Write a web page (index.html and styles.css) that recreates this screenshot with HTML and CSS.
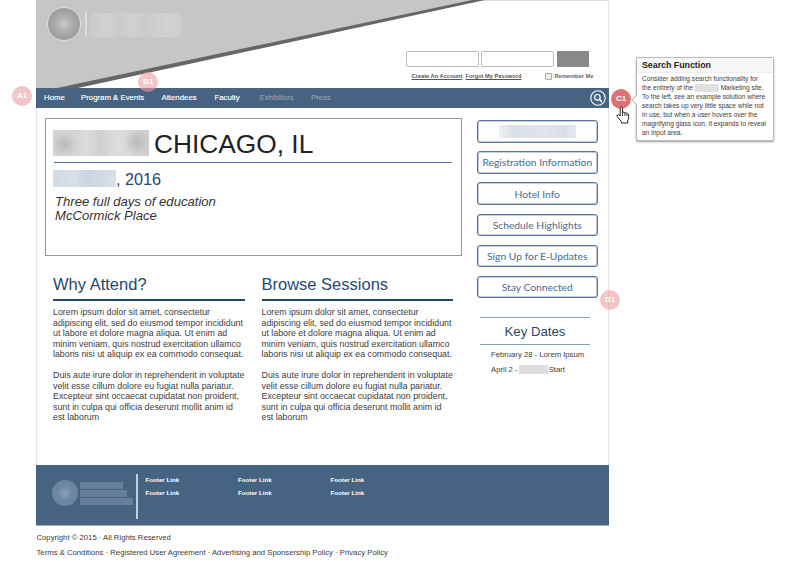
FILE: index.html
```
<!DOCTYPE html>
<html lang="en">
<head>
<meta charset="utf-8">
<title>Chicago, IL 2016</title>
<link rel="stylesheet" href="styles.css">
</head>
<body>
<div class="page">
  <header class="header">
    <svg class="slope" viewBox="0 0 573 88" aria-hidden="true">
      <path d="M0 0H448L28 88H0Z" fill="#c6c6c6"/>
      <path d="M436 0H449L42 88H21Z" fill="#666"/>
    </svg>
    <div class="brand"><span class="seal"></span><span class="brand-bar"></span><span class="brand-name"></span></div>
    <form class="login">
      <div class="login-row"><input class="field" type="text" aria-label="User"><input class="field" type="text" aria-label="Key"><span class="submit"></span></div>
      <div class="login-links"><a class="create">Create An Account</a><a class="forgot">Forgot My Password</a><span class="check"></span><span class="remember">Remember Me</span></div>
    </form>
  </header>
  <nav class="nav">
    <a class="n1">Home</a><a class="n2">Program &amp; Events</a><a class="n3">Attendees</a><a class="n4">Faculty</a><a class="n5 dim">Exhibitors</a><a class="dim">Press</a>
    <svg class="search" viewBox="0 0 16 16" fill="none" stroke="#fff"><circle cx="8" cy="8" r="7.2" stroke-width="1.1"/><circle cx="7.4" cy="7.3" r="2.8" stroke-width="1.2"/><path d="M9.4 9.4l2.5 2.5" stroke-width="1.6"/></svg>
  </nav>
  <main class="main">
    <div class="content">
      <section class="hero">
        <h1><span class="blur-title"></span><span class="city">CHICAGO, IL</span></h1>
        <h2><span class="blur-date"></span><span>, 2016</span></h2>
        <p>Three full days of education<br>McCormick Place</p>
      </section>
      <div class="columns">
        <article>
          <h3 class="why">Why Attend?</h3>
          <p>Lorem ipsum dolor sit amet, consectetur<br>adipiscing elit, sed do eiusmod tempor incididunt<br>ut labore et dolore magna aliqua. Ut enim ad<br>minim veniam, quis nostrud exercitation ullamco<br>laboris nisi ut aliquip ex ea commodo consequat.</p>
          <p>Duis aute irure dolor in reprehenderit in voluptate<br>velit esse cillum dolore eu fugiat nulla pariatur.<br>Excepteur sint occaecat cupidatat non proident,<br>sunt in culpa qui officia deserunt mollit anim id<br>est laborum</p>
        </article>
        <article>
          <h3>Browse Sessions</h3>
          <p>Lorem ipsum dolor sit amet, consectetur<br>adipiscing elit, sed do eiusmod tempor incididunt<br>ut labore et dolore magna aliqua. Ut enim ad<br>minim veniam, quis nostrud exercitation ullamco<br>laboris nisi ut aliquip ex ea commodo consequat.</p>
          <p>Duis aute irure dolor in reprehenderit in voluptate<br>velit esse cillum dolore eu fugiat nulla pariatur.<br>Excepteur sint occaecat cupidatat non proident,<br>sunt in culpa qui officia deserunt mollit anim id<br>est laborum</p>
        </article>
      </div>
    </div>
    <aside class="sidebar">
      <div class="buttons">
        <a class="button"><span class="blur-button"></span></a>
        <a class="button">Registration Information</a>
        <a class="button">Hotel Info</a>
        <a class="button">Schedule Highlights</a>
        <a class="button">Sign Up for E-Updates</a>
        <a class="button">Stay Connected</a>
      </div>
      <section class="dates">
        <h4>Key Dates</h4>
        <p>February 28 - Lorem Ipsum</p>
        <p>April 2 - <span class="blur-word"></span>Start</p>
      </section>
    </aside>
  </main>
  <footer class="footer">
    <span class="foot-seal"></span>
    <div class="foot-name"><i></i><i></i><i></i></div>
    <span class="foot-bar"></span>
    <div class="foot-links"><a>Footer Link</a><a>Footer Link</a><a>Footer Link</a><a>Footer Link</a><a>Footer Link</a><a>Footer Link</a></div>
  </footer>
</div>
<div class="legal"><p>Copyright © 2015 · All Rights Reserved</p><p>Terms &amp; Conditions · Registered User Agreement · Advertising and Sponsership Policy · Privacy Policy</p></div>

<span class="marker a1">A1</span>
<span class="marker b1">B1</span>
<span class="marker c1">C1</span>
<span class="marker d1">D1</span>
<svg class="hand" viewBox="0 0 14 18"><path d="M4.2 10V2.2q0-1.3 1.1-1.3t1.2 1.3V7q.2-1 1.2-.9 1 .1 1 1.2.3-.8 1.2-.6.9.2.9 1.2.4-.6 1.1-.3.8.3.7 1.2v3q0 1.800-1 3.100V17H5.400v-1.500L1.300 10.800Q.5 9.600 1.300 9q1-.6 1.800.2Z" fill="#fff" stroke="#222" stroke-width="1"/><path d="M6.500 7v3M8.900 7.500V10M11 8.300V10" fill="none" stroke="#222" stroke-width=".9"/></svg>
<aside class="note">
  <h5>Search Function</h5>
  <p>Consider adding search functionality for<br>the entirety of the <span class="blur-note"></span> Marketing site.<br>To the left, see an example solution where<br>search takes up very little space while not<br>in use, but when a user hovers over the<br>magnifying glass icon, it expands to reveal<br>an input area.</p>
</aside>
</body>
</html>
```
FILE: styles.css
```
* { box-sizing: border-box; }
body { margin: 0; background: #fff; color: #3c3c3c; font-family: "Liberation Sans", Arial, sans-serif; position: relative; height: 570px; overflow: hidden; }
h1, h2, h3, h4, h5, p { margin: 0; font-weight: 400; white-space: nowrap; }
.page { width: 573px; margin-left: 36px; }

.header { height: 88px; position: relative; display: flex; border-right: 1px solid #e4e4e4; border-top: 1px solid #ddd; }
.slope { position: absolute; left: 0; top: -1px; width: 573px; height: 88px; }
.brand { position: relative; display: flex; padding: 6px 0 0 11px; }
.seal { width: 34px; height: 34px; border-radius: 50%; border: 1px solid #ddd; background: radial-gradient(circle, #c4c4c4 0 10%, #b0b0b0 30%, #999 75%); }
.brand-bar { width: 2px; height: 24px; margin: 5px 0 0 4px; background: #ddd; }
.brand-name { width: 91px; height: 24px; margin: 6px 0 0 3px; background: linear-gradient(90deg, #cbcbcb, #d2d2d2 20%, #cacaca 32%, #d1d1d1 45%, #cbcbcb 60%, #d2d2d2 85%, #cdcdcd); }
.login { position: relative; margin: 50px 0 0 224.500px; }
.login-row { display: flex; gap: 2px; }
.field { width: 73px; height: 16px; padding: 0; border: 1px solid #bbb; border-radius: 2px; background: #fff; }
.submit { width: 32px; height: 16px; margin-left: 1px; background: #898989; }
.login-links { display: flex; margin: 5px 0 0 6px; font-size: 5.7px; line-height: 8px; font-weight: 700; color: #666; white-space: nowrap; }
.create, .forgot { text-decoration: underline; color: #555; }
.create { width: 54px; }
.forgot { width: 79.500px; }
.check { width: 6.500px; height: 6.500px; margin: 1px 3px 0 0; border: 1px solid #aaa; border-radius: 1px; background: #eee; }

.nav { height: 20px; display: flex; position: relative; padding-left: 8px; background: #466382; color: #fff; font-size: 7.800px; line-height: 20px; white-space: nowrap; -webkit-text-stroke: .15px; }
.n1 { width: 37px; }
.n2 { width: 80.500px; }
.n3 { width: 53px; }
.n4 { width: 45px; }
.n5 { width: 51.500px; }
.dim { color: #98a5b4; -webkit-text-stroke: .1px; }
.search { width: 16px; height: 16px; margin: 2px 3px 0 auto; }

.main { height: 357px; display: flex; border: solid #e4e4e4; border-width: 0 1px; }
.content { width: 440px; padding: 10px 0 0 8px; }
.hero { width: 417px; height: 138px; padding: 12px 9px 0 7px; border: 1px solid #999; }
.hero h1 { display: flex; height: 32px; border-bottom: 1px solid #53719a; font-size: 26.300px; line-height: 27px; color: #222; margin-left: 1px; }
.blur-title { width: 96px; height: 26px; margin: -1px 5px 0 -1px; background: radial-gradient(circle at 12% 55%, #bbb, transparent 15%), radial-gradient(circle at 87% 45%, #bbb, transparent 15%), linear-gradient(90deg, #d4d4d4 0 25%, #dcdcdc 35%, #d0d0d0 50%, #dcdcdc 65%, #ddd 70%, #ccc); }
.hero h2 { display: flex; margin-top: 7px; font-size: 16.200px; line-height: 18px; color: #29486c; }
.blur-date { width: 63px; height: 17px; background: linear-gradient(90deg, #d2dae3, #d8e0e8 35%, #cad4e0 55%, #d9e0e8); }
.hero p { margin: 7px 0 0 2px; font-size: 13.100px; line-height: 13.500px; font-style: italic; color: #333; }
.columns { display: flex; gap: 17px; padding: 19px 0 0 8px; }
.columns article { width: 191.500px; }
.columns h3 { height: 26px; margin-bottom: 6px; border-bottom: 2px solid #24466c; font-size: 16.500px; line-height: 19px; color: #29486c; }
.columns p { margin-bottom: 10.500px; font-size: 8.830px; line-height: 10.500px; }

.sidebar { padding: 12px 0 0 0; }
.buttons { display: flex; flex-direction: column; gap: 8.700px; }
.button { width: 120.500px; height: 22.500px; display: flex; align-items: center; justify-content: center; border: 1px solid #58769a; box-shadow: inset 0 0 0 .6px #8ba0b9; border-radius: 3px; font-family: Lato, sans-serif; font-size: 10.300px; color: #4b698c; white-space: nowrap; }
.blur-button { width: 77px; height: 13px; background: linear-gradient(90deg, #edf0f3, #dae0e8 20%, #e0e5eb 60%, #d8dee7 85%, #e7ebef); }
.dates { margin: 19px 0 0 3px; width: 110px; font-size: 7.700px; }
.dates h4 { height: 28px; border: solid #8ba0b7; border-width: 1px 0; font-size: 13.200px; line-height: 27px; text-align: center; color: #29486c; }
.dates p { margin: 3px 0 0 11px; height: 11.500px; line-height: 13px; }
.blur-word { display: inline-block; width: 29px; height: 9px; margin: 0 1px 0 -1px; vertical-align: -2px; background: #dedede; }

.footer { height: 61px; display: flex; padding: 9px 0 0 16px; background: #466382; border-bottom: 1px solid #aaa; }
.foot-seal { width: 26px; height: 26px; margin-top: 6px; border-radius: 50%; background: radial-gradient(circle, #8c9fb6, #6d86a1 40%, #6a829e); }
.foot-name { width: 54px; margin: 8px 0 0 2px; }
.foot-name i { display: block; width: 43px; height: 7px; margin-bottom: 1px; background: #687f99; }
.foot-name i:nth-child(2) { width: 47px; }
.foot-name i:nth-child(3) { width: 53px; }
.foot-bar { width: 2px; height: 45px; margin-left: 2px; background: #c2cedb; }
.foot-links { display: grid; grid-template-columns: repeat(3, 92.500px); grid-auto-rows: 12.500px; margin-left: 7.500px; font-size: 6.200px; line-height: 12px; font-weight: 700; color: #fff; }
.legal { margin: 5px 0 0 36.500px; font-size: 7.720px; line-height: 14.500px; }

.marker { position: absolute; width: 20px; height: 20px; border-radius: 50%; background: rgba(237, 158, 160, .6); color: #fff; font-size: 8px; font-weight: 700; line-height: 20px; text-align: center; }
.a1 { left: 12px; top: 86px; }
.b1 { left: 138px; top: 72px; }
.c1 { left: 611px; top: 89px; background: #e07175; }
.d1 { left: 600px; top: 290px; }
.hand { position: absolute; left: 616px; top: 106px; width: 14px; height: 18px; }
.note { position: absolute; left: 636px; top: 57px; width: 138px; height: 84px; border: 1px solid #bbb; border-radius: 2px; background: #fff; box-shadow: 0 1px 2px #999; }
.note::before { content: ""; position: absolute; left: -4px; top: 38px; width: 7px; height: 7px; background: #fff; border: solid #bbb; border-width: 0 0 1px 1px; transform: rotate(45deg); }
.note h5 { height: 15px; padding-left: 5px; background: #f7f7f7; border-bottom: 1px solid #eee; font-size: 8.800px; line-height: 14px; font-weight: 700; color: #222; }
.note p { padding: 1px 0 0 5px; font-size: 6.600px; line-height: 9px; }
.blur-note { display: inline-block; width: 24px; height: 8px; vertical-align: -2px; background: #e0e0e0; }
```
